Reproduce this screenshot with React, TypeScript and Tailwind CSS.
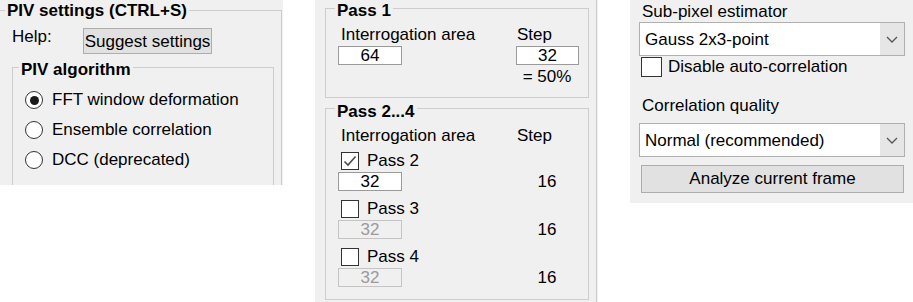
import React from "react";

const font = "font-['Liberation_Sans',Arial,sans-serif] text-[17px] text-black";

function GroupTitle({ children, className }: { children: React.ReactNode; className: string }) {
  return (
    <div className={`w-fit bg-[#f0f0f0] px-[2px] font-bold leading-[20px] ${className}`}>{children}</div>
  );
}

function Radio({ checked, label }: { checked?: boolean; label: string }) {
  return (
    <div className="flex h-[30px] items-center gap-[9px]">
      <span className="flex h-[18px] w-[18px] items-center justify-center rounded-full border border-[#333] bg-white">
        {checked && <span className="h-[9px] w-[9px] rounded-full bg-[#1a1a1a]" />}
      </span>
      <span className="leading-[20px]">{label}</span>
    </div>
  );
}

function CheckBox({ checked, big }: { checked?: boolean; big?: boolean }) {
  return (
    <span
      className={`flex items-center justify-center border border-[#333] bg-white ${
        big ? "h-[20px] w-[21px]" : "h-[18px] w-[18px]"
      }`}
    >
      {checked && (
        <svg width="14" height="12" viewBox="0 0 14 12">
          <path d="M1.5 6.5 L5 10 L12.5 1.5" fill="none" stroke="#4a4a4a" strokeWidth="1.6" />
        </svg>
      )}
    </span>
  );
}

function Field({ value, disabled, className }: { value: string; disabled?: boolean; className: string }) {
  return (
    <div
      className={`h-[19px] border text-center leading-[17px] ${
        disabled ? "border-[#c4c4c4] bg-[#f0f0f0] text-[#9a9a9a]" : "border-[#9a9a9a] bg-white"
      } ${className}`}
    >
      {value}
    </div>
  );
}

function PassRow({ label, checked }: { label: string; checked?: boolean }) {
  return (
    <>
      <div className="flex h-[20px] items-center gap-[8px] pl-[3px]">
        <CheckBox checked={checked} />
        <span className="leading-[20px]">{label}</span>
      </div>
      <div className="mt-[1px] grid grid-cols-[178px_62px] items-center">
        <Field value="32" disabled={!checked} className="w-[64px]" />
        <div className="text-center leading-[19px]">16</div>
      </div>
    </>
  );
}

function Select({ value }: { value: string }) {
  return (
    <div className="flex h-[34px] w-[266px] border border-[#b0b0b0] bg-white">
      <div className="flex flex-1 items-center pl-[5px] pt-[2px] leading-[20px]">{value}</div>
      <div className="flex w-[24px] items-center justify-center bg-[#e6e6e6]">
        <svg width="12" height="7" viewBox="0 0 12 7">
          <path d="M1 1 L6 6 L11 1" fill="none" stroke="#555" strokeWidth="1.3" />
        </svg>
      </div>
    </div>
  );
}

export default function App() {
  return (
    <div className={`flex h-[302px] w-[913px] items-start gap-8 bg-white ${font}`}>
      {/* PIV settings */}
      <div className="h-[185px] w-[283px] overflow-hidden bg-[#f0f0f0]">
        <div className="mr-[1px] mt-[10px] h-[200px] border-r border-t border-[#cdcdcd]">
          <GroupTitle className="-mt-[10px] ml-[5px]">PIV settings (CTRL+S)</GroupTitle>
          <div className="mt-[6px] flex items-start">
            <span className="w-[83px] pl-[12px] leading-[20px]">Help:</span>
            <div className="mt-[1px] h-[26px] w-[129px] border border-[#adadad] bg-[#e1e1e1] pb-[1px] pt-[3px] text-center leading-[20px]">
              Suggest settings
            </div>
          </div>
          <div className="ml-[12px] mt-[13px] h-[119px] w-[262px] border border-[#cdcdcd]">
            <GroupTitle className="-mt-[8px] ml-[6px]">PIV algorithm</GroupTitle>
            <div className="mt-[5px] pl-[12px]">
              <Radio checked label="FFT window deformation" />
              <Radio label="Ensemble correlation" />
              <Radio label="DCC (deprecated)" />
            </div>
          </div>
        </div>
      </div>

      {/* Passes */}
      <div className="h-[302px] w-[283px] bg-[#f0f0f0]">
        <div className="mr-[1px] h-full border-r border-[#cdcdcd] pt-[8px]">
          <div className="ml-[10px] h-[90px] w-[264px] border border-[#cdcdcd]">
            <GroupTitle className="-mt-[8px] ml-[9px]">Pass 1</GroupTitle>
            <div className="mt-[4px] grid grid-cols-[178px_62px] pl-[12px] leading-[20px]">
              <span className="pl-[3px]">Interrogation area</span>
              <span className="pl-[1px]">Step</span>
              <Field value="64" className="mt-[1px] w-[64px]" />
              <Field value="32" className="mt-[1px] w-[63px]" />
              <span />
              <span className="mt-[2px] text-center">= 50%</span>
            </div>
          </div>
          <div className="ml-[10px] mt-[10px] h-[192px] w-[264px] border border-[#cdcdcd]">
            <GroupTitle className="-mt-[7px] ml-[9px]">Pass 2...4</GroupTitle>
            <div className="pl-[12px]">
              <div className="mt-[4px] grid grid-cols-[178px_62px] leading-[20px]">
                <span className="pl-[3px]">Interrogation area</span>
                <span className="pl-[1px]">Step</span>
              </div>
              <div className="mt-[5px]">
                <PassRow label="Pass 2" checked />
              </div>
              <div className="mt-[8px]">
                <PassRow label="Pass 3" />
              </div>
              <div className="mt-[8px]">
                <PassRow label="Pass 4" />
              </div>
            </div>
          </div>
        </div>
      </div>

      {/* Correlation options */}
      <div className="h-[203px] w-[283px] bg-[#f0f0f0] pl-[9px] pt-[2px]">
        <div className="pl-[3px] leading-[20px]">Sub-pixel estimator</div>
        <Select value="Gauss 2x3-point" />
        <div className="mt-[1px] flex h-[20px] items-center gap-[6px] pl-[2px]">
          <CheckBox big />
          <span className="leading-[20px]">Disable auto-correlation</span>
        </div>
        <div className="mt-[19px] pl-[3px] leading-[20px]">Correlation quality</div>
        <div className="mt-[7px]">
          <Select value="Normal (recommended)" />
        </div>
        <div className="ml-[2px] mt-[8px] h-[28px] w-[263px] border border-[#adadad] bg-[#e1e1e1] pt-[3px] text-center leading-[20px]">
          Analyze current frame
        </div>
      </div>
    </div>
  );
}
